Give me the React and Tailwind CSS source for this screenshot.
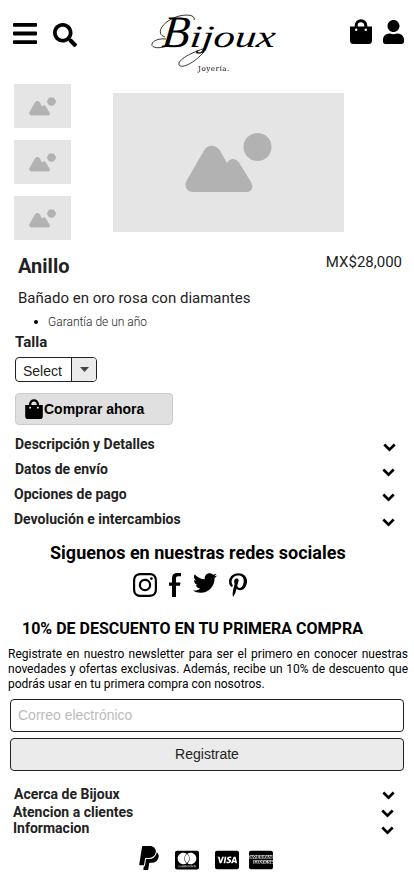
import React from 'react';
import { FaSearch, FaUser, FaTwitter, FaPinterestP, FaCcVisa, FaCcMastercard, FaCcAmex } from 'react-icons/fa';
import { SiInstagram, SiPaypal } from 'react-icons/si';

const BagIcon = ({ className }) => (
  <svg viewBox="0 0 22 25" className={className} fill="none">
    <path d="M6.200 9V6.500a4.800 4.800 0 0 1 9.600 0V9" stroke="#000" strokeWidth="3" />
    <path d="M0 7.500h22v14a3.500 3.500 0 0 1-3.500 3.500h-15A3.500 3.500 0 0 1 0 21.500z" fill="#000" />
    <circle cx="6.200" cy="10.800" r="1.200" fill="#fff" />
    <circle cx="15.800" cy="10.800" r="1.200" fill="#fff" />
  </svg>
);

const MenuIcon = () => (
  <svg viewBox="0 0 24 22" className="h-[22px] w-6">
    <rect y="0" width="24" height="3.800" rx="0.800" />
    <rect y="8.600" width="24" height="3.800" rx="0.800" />
    <rect y="17.200" width="24" height="3.800" rx="0.800" />
  </svg>
);

const Chevron = () => (
  <svg viewBox="0 0 13 9" className="h-[9px] w-[13px]" fill="none" stroke="#000" strokeWidth="2.700">
    <path d="M1.300 1.500 6.500 6.600l5.200-5.100" />
  </svg>
);

const Placeholder = ({ className }) => (
  <svg viewBox="0 0 87 60" className={className} fill="#b2b2b2">
    <path d="M19 17.500C22 11 31 11 35 17.500L42 30C45 25 50 24.500 54 29.500L66 49C69 54 67 59 60.500 59H9C1.500 59-1.500 53 2 47z" />
    <circle cx="72.500" cy="14" r="14" />
  </svg>
);

const Thumb = () => (
  <div className="flex h-11 w-[57px] items-center justify-center bg-[#e5e5e5]">
    <Placeholder className="h-[19px] w-[27px]" />
  </div>
);

const Row = ({ label, className, chevronClass = 'pt-[7px]' }) => (
  <div className={`flex items-center justify-between text-sm font-bold whitespace-nowrap text-[#222] ${className}`}>
    <span>{label}</span>
    <span className={chevronClass}>
      <Chevron />
    </span>
  </div>
);

// Wordmark with thin ornamental swashes behind the lettering
const Logo = () => (
  <div className="relative h-[51px] w-[132px] font-['Liberation_Serif',serif] leading-[40px] italic">
    <svg viewBox="0 0 132 60" className="absolute top-0 left-0 h-[60px] w-[132px]" fill="none" stroke="#000" strokeWidth="0.800">
      <path d="M18 27C9 26 3 30 4 33.500C6 37 15 36 22 33" />
      <path d="M17 25C7 22 14 10 28 5C38 1.500 48 3 46 8" />
      <path d="M58 36C44 40 29 48 31 53C34 57 46 51 56 40" />
    </svg>
    <div className="flex origin-bottom-left -skew-x-6 items-baseline pl-[12px]">
      <span className="text-[45px]">B</span>
      <span className="origin-left scale-x-[1.38] text-[31px]">ijoux</span>
    </div>
  </div>
);

export default function App() {
  return (
    <div className="h-[896px] w-[414px] overflow-hidden bg-white font-['Roboto',sans-serif] text-black">
      <header className="flex h-[84px] items-start">
        <div className="flex w-[148px] pt-[23px] pl-[13px]">
          <MenuIcon />
          <FaSearch className="ml-4 size-6" />
        </div>
        <div className="flex w-[132px] flex-col items-center pt-3">
          <Logo />
          <span className="font-['DejaVu_Serif',serif] text-[7px] leading-3 tracking-[0.6px]">Joyería.</span>
        </div>
        <div className="flex flex-1 pt-[19px] pl-[70px]">
          <BagIcon className="h-[25px] w-[22px]" />
          <FaUser className="mt-px ml-[11px] h-6 w-[21px]" />
        </div>
      </header>

      <section className="flex h-[156px] pl-[14px]">
        <div className="flex flex-col gap-3">
          <Thumb />
          <Thumb />
          <Thumb />
        </div>
        <div className="mt-[9px] ml-[42px] flex h-[139px] w-[231px] items-center justify-center bg-[#e5e5e5]">
          <Placeholder className="mt-px h-[60px] w-[87px]" />
        </div>
      </section>

      <section className="text-[#222]">
        <div className="flex h-[46px] justify-between pr-3 pl-[18px] whitespace-nowrap">
          <h1 className="pt-[14px] text-xl leading-6 font-bold">Anillo</h1>
          <p className="pt-3 text-[15px] leading-5">MX$28,000</p>
        </div>
        <p className="h-[26px] pt-0.5 pl-[18px] text-[15px] leading-5 whitespace-nowrap">Bañado en oro rosa con diamantes</p>
        <ul className="flex h-5 items-center pl-[34px] text-xs">
          <li className="flex items-center gap-2.5 font-light">
            <span className="size-1 rounded-full bg-black" />
            Garantía de un año
          </li>
        </ul>
        <h2 className="h-[25px] pl-[15px] text-[15px] leading-5 font-bold">Talla</h2>
        <button className="ml-[15px] flex h-[25px] w-[82px] overflow-hidden rounded border border-[#222] bg-white font-['Liberation_Sans',sans-serif] text-sm text-[#222]">
          <span className="h-full w-14 border-r border-[#222] pl-[7px] text-left leading-[26px]">Select</span>
          <span className="flex h-full flex-1 items-center justify-center bg-[#ebebeb]">
            <svg viewBox="0 0 9 5" className="h-[5px] w-[9px]" fill="#444">
              <path d="M0 0h9L4.500 5z" />
            </svg>
          </span>
        </button>
        <button className="mt-[11px] ml-[15px] flex h-8 w-[158px] items-center rounded border border-[#ccc] bg-[#e0e0e0] pl-[9px] font-['Liberation_Sans',sans-serif] text-sm font-bold text-black">
          <BagIcon className="-mt-px h-5 w-[18px]" />
          <span className="ml-px">Comprar ahora</span>
        </button>
      </section>

      <section className="mt-1.5">
        <Row label="Descripción y Detalles" className="h-[25px] pr-[18px] pl-[15px]" />
        <Row label="Datos de envío" className="h-[25px] pr-[19px] pl-[15px]" />
        <Row label="Opciones de pago" className="h-[25px] pr-[19px] pl-[14px]" />
        <Row label="Devolución e intercambios" className="h-[25px] pr-[19px] pl-[14px]" />
      </section>

      <section>
        <h2 className="mt-[10px] h-[32px] pl-[50px] text-lg leading-6 font-bold whitespace-nowrap">Siguenos en nuestras redes sociales</h2>
        <div className="flex h-6 pl-[133px]">
          <SiInstagram className="size-6" />
          <svg viewBox="0 0 12 24" className="ml-3 h-6 w-3">
            <path d="M12 0v3.200H9.400C7.600 3.200 7 4 7 5.500v4h4.500l-.6 3.300H7V24H3V12.800H0V9.500h3V5.200C3 1.800 5 0 8.200 0z" />
          </svg>
          <FaTwitter className="-mt-0.5 ml-3 size-6" />
          <FaPinterestP className="ml-3 h-6 w-[18px]" />
        </div>
      </section>

      <section className="pt-5">
        <h2 className="h-[30px] pl-[22px] text-base leading-6 font-bold whitespace-nowrap">10% DE DESCUENTO EN TU PRIMERA COMPRA</h2>
        <p className="mr-1.5 ml-2 h-[52px] text-justify text-xs leading-[15px]">
          Registrate en nuestro newsletter para ser el primero en conocer nuestras novedades y ofertas exclusivas. Además, recibe un 10% de descuento que podrás usar en tu primera compra con nosotros.
        </p>
        <input
          placeholder="Correo electrónico"
          className="ml-[10px] block h-[33px] w-[394px] rounded border border-[#222] px-[7px] pb-0.5 font-['Liberation_Sans',sans-serif] text-sm placeholder:text-[#bbb]"
        />
        <button className="mt-1.5 ml-[10px] block h-[33px] w-[394px] rounded border border-[#222] bg-[#ebebeb] pb-0.5 font-['Liberation_Sans',sans-serif] text-sm text-[#222]">
          Registrate
        </button>
      </section>

      <footer className="pt-[13px]">
        <Row label="Acerca de Bijoux" className="h-[19px] pr-[19px] pl-[14px]" chevronClass="pt-1" />
        <Row label="Atencion a clientes" className="h-[17px] pr-5 pl-[13px]" chevronClass="pt-1" />
        <Row label="Informacion" className="h-4 pr-5 pl-[13px]" chevronClass="pt-1" />
        <div className="flex items-center pt-[9px] pl-[137px]">
          <SiPaypal className="-mt-px size-6" />
          <FaCcMastercard className="mt-1 ml-[14px] h-[22px] w-6" />
          <FaCcVisa className="mt-1 ml-4 h-[22px] w-6" />
          <FaCcAmex className="mt-1 ml-[10px] h-[22px] w-6" />
        </div>
      </footer>
    </div>
  );
}
